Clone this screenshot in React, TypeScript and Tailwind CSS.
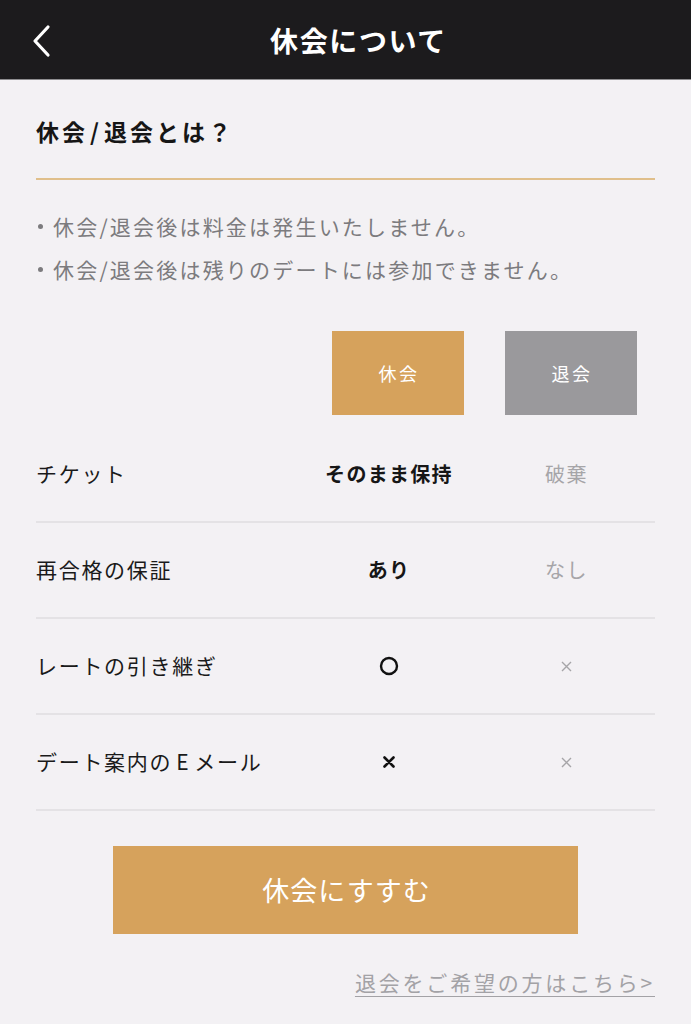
import React from 'react';

const FONT = {
  fontFamily: '"Noto Sans CJK JP", "Noto Sans", sans-serif',
};

type Cell = 'text' | 'circle' | 'cross';

const rows: {
  label: React.ReactNode;
  key: string;
  pause: { kind: Cell; text?: string };
  quit: { kind: Cell; text?: string };
}[] = [
  { key: 'ticket', label: 'チケット', pause: { kind: 'text', text: 'そのまま保持' }, quit: { kind: 'text', text: '破棄' } },
  { key: 'guarantee', label: '再合格の保証', pause: { kind: 'text', text: 'あり' }, quit: { kind: 'text', text: 'なし' } },
  { key: 'rate', label: 'レートの引き継ぎ', pause: { kind: 'circle' }, quit: { kind: 'cross' } },
  {
    key: 'mail',
    label: (
      <>
        デート案内の<span className="px-[4px]">E</span>メール
      </>
    ),
    pause: { kind: 'cross' },
    quit: { kind: 'cross' },
  },
];

const Mark = ({ kind, text, strong }: { kind: Cell; text?: string; strong: boolean }) => {
  if (kind === 'circle') {
    return (
      <svg width="20" height="20" viewBox="0 0 20 20">
        <circle cx="10" cy="10" r="8" fill="none" stroke="#111" strokeWidth="2.4" />
      </svg>
    );
  }
  if (kind === 'cross') {
    return strong ? (
      <svg width="14" height="14" viewBox="0 0 14 14">
        <path d="M2.5 2.5 L11.5 11.5 M11.5 2.5 L2.5 11.5" stroke="#111" strokeWidth="2.6" strokeLinecap="round" />
      </svg>
    ) : (
      <svg width="13" height="13" viewBox="0 0 13 13">
        <path d="M2 2 L11 11 M11 2 L2 11" stroke="#a6a5a8" strokeWidth="1.4" />
      </svg>
    );
  }
  return (
    <span
      className={
        strong
          ? 'text-[20px] font-bold tracking-[1.3px] text-[#161616]'
          : 'text-[20px] tracking-[1.5px] text-[#a6a5a8]'
      }
    >
      {text}
    </span>
  );
};

const Bullet = ({ children }: { children: React.ReactNode }) => (
  <li className="flex items-center">
    <span className="flex w-[17px] justify-start pl-[2px]">
      <span className="h-[5px] w-[5px] rounded-full bg-[#7c7b7e]" />
    </span>
    <span>{children}</span>
  </li>
);

export default function App() {
  return (
    <div className="min-h-[1024px] w-[691px] bg-[#f3f1f4]" style={FONT}>
      <header className="relative flex h-[80px] items-center justify-center border-b border-[#8e8d90] bg-[#1c1b1d] pl-[26px]">
        <button className="absolute left-[28px] top-[24px] flex h-[34px] w-[26px] items-center justify-center">
          <svg width="22" height="34" viewBox="0 0 22 34">
            <path d="M18 3 L5 17 L18 31" fill="none" stroke="#fff" strokeWidth="3.2" strokeLinecap="round" strokeLinejoin="round" />
          </svg>
        </button>
        <h1 className="text-[28px] font-bold tracking-[1.6px] text-white">休会について</h1>
      </header>

      <main className="px-[36px]">
        <h2 className="mt-[33px] h-[36px] text-[23px] font-bold leading-[36px] tracking-[3px] text-[#161616]">
          休会<span className="mx-[2px]">/</span>退会とは？
        </h2>
        <div className="mt-[29px] h-[2px] bg-[#e0bf8b]" />

        <ul className="mt-[31px] flex flex-col gap-[13px] text-[21px] leading-[30px] tracking-[2.2px] text-[#7c7b7e]">
          <Bullet>休会/退会後は料金は発生いたしません。</Bullet>
          <Bullet>休会/退会後は残りのデートには参加できません。</Bullet>
        </ul>

        <div className="mt-[47px] flex gap-[41px] pl-[296px]">
          <div className="flex h-[84px] w-[132px] items-center justify-center bg-[#d6a25c] pl-[2px] text-[18px] tracking-[2.5px] text-white">
            休会
          </div>
          <div className="flex h-[84px] w-[132px] items-center justify-center bg-[#9a999c] pl-[2px] text-[18px] tracking-[2.5px] text-white">
            退会
          </div>
        </div>

        <div className="mt-[12px]">
          {rows.map((r) => (
            <div
              key={r.key}
              className="grid h-[96px] grid-cols-[264px_178px_177px] items-center border-b-2 border-[#e4e2e5]"
            >
              <span className="text-[21px] tracking-[1.7px] text-[#1a1a1a]">{r.label}</span>
              <div className="flex justify-center">
                <Mark kind={r.pause.kind} text={r.pause.text} strong />
              </div>
              <div className="flex justify-center">
                <Mark kind={r.quit.kind} text={r.quit.text} strong={false} />
              </div>
            </div>
          ))}
        </div>

        <div className="mt-[35px] flex justify-center">
          <button className="h-[88px] w-[465px] bg-[#d6a25c] pl-[2px] text-[27px] tracking-[1px] text-white">
            休会にすすむ
          </button>
        </div>

        <div className="mt-[33px] flex justify-end">
          <a className="text-[21px] tracking-[2.8px] text-[#a3a2a6] underline decoration-1 underline-offset-[5px]">
            退会をご希望の方はこちら&gt;
          </a>
        </div>
      </main>
    </div>
  );
}
